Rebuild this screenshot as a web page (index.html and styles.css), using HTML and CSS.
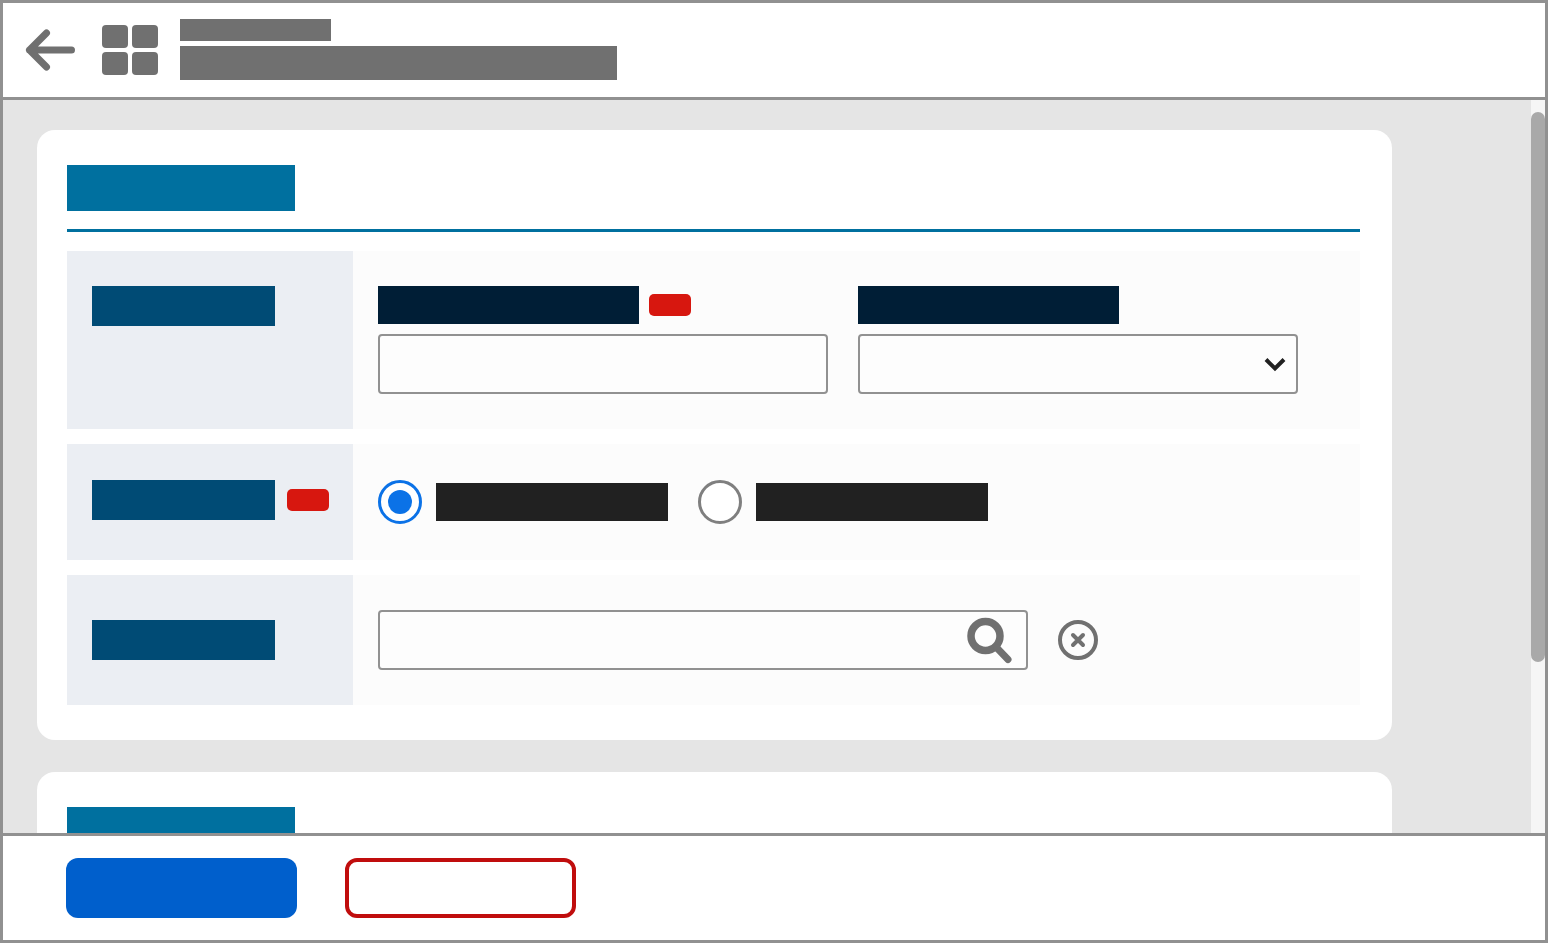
FILE: index.html
```html
<!DOCTYPE html>
<html>

<head>
    <meta charset="utf-8">
    <title>Form</title>
    <link rel="stylesheet" href="styles.css">
</head>

<body>
    <div class="frame">
        <header class="topBar">
            <svg class="backIcon" viewBox="0 0 52 44" width="52" height="44">
                <path d="M47.5 22H5.5M22.5 5L5.5 22L22.5 39" fill="none" stroke="#707070" stroke-width="7" stroke-linecap="round" stroke-linejoin="round"/>
            </svg>
            <div class="gridIcon">
                <span></span><span></span><span></span><span></span>
            </div>
            <div class="titles">
                <div class="titleSmall"></div>
                <div class="titleLarge"></div>
            </div>
        </header>

        <div class="middle">
            <main class="content">
                <section class="card">
                    <div class="cardHeading"></div>
                    <div class="cardRule"></div>

                    <div class="row rowName">
                        <div class="rowLabel">
                            <div class="labelBar"></div>
                        </div>
                        <div class="rowValue">
                            <div class="field fieldLeft">
                                <div class="fieldLabel">
                                    <div class="fieldBar"></div>
                                    <div class="badge"></div>
                                </div>
                                <div class="inputBox"></div>
                            </div>
                            <div class="field fieldRight">
                                <div class="fieldLabel">
                                    <div class="fieldBar"></div>
                                </div>
                                <div class="inputBox selectBox">
                                    <svg viewBox="0 0 24 24" width="24" height="24">
                                        <path d="M3 7.500L12 16.500L21 7.500" fill="none" stroke="#212121" stroke-width="4"/>
                                    </svg>
                                </div>
                            </div>
                        </div>
                    </div>

                    <div class="row rowChoice">
                        <div class="rowLabel">
                            <div class="labelBar"></div>
                            <div class="badge"></div>
                        </div>
                        <div class="rowValue">
                            <div class="radioOption">
                                <span class="radio checked"></span>
                                <div class="radioBar"></div>
                            </div>
                            <div class="radioOption">
                                <span class="radio"></span>
                                <div class="radioBar"></div>
                            </div>
                        </div>
                    </div>

                    <div class="row rowSearch">
                        <div class="rowLabel">
                            <div class="labelBar"></div>
                        </div>
                        <div class="rowValue">
                            <div class="inputBox searchBox">
                                <svg viewBox="0 0 48 48" width="48" height="48">
                                    <circle cx="19.500" cy="20" r="14.500" fill="none" stroke="#707070" stroke-width="7.500"/>
                                    <path d="M31 32L42 43.500" fill="none" stroke="#707070" stroke-width="7" stroke-linecap="round"/>
                                </svg>
                            </div>
                            <svg class="clearIcon" viewBox="0 0 40 40" width="40" height="40">
                                <circle cx="20" cy="20" r="18" fill="none" stroke="#707070" stroke-width="4"/>
                                <path d="M15 15L25 25M25 15L15 25" fill="none" stroke="#707070" stroke-width="4" stroke-linecap="round"/>
                            </svg>
                        </div>
                    </div>
                </section>

                <section class="card">
                    <div class="cardHeading"></div>
                </section>
            </main>
            <div class="scrollTrack">
                <div class="scrollThumb"></div>
            </div>
        </div>

        <footer class="bottomBar">
            <button class="btn btnPrimary"></button>
            <button class="btn btnDanger"></button>
        </footer>
    </div>
</body>
</html>
```

FILE: styles.css
```css
html, body {
    margin: 0;
    height: 100%;
    overflow: hidden;
    background-color: white;
}

.frame {
    box-sizing: border-box;
    width: 1548px;
    height: 943px;
    border: 3px solid #919191;
    display: flex;
    flex-direction: column;
}

/* top bar */
.topBar {
    flex: none;
    height: 94px;
    border-bottom: 3px solid #919191;
    padding-left: 21px;
    display: flex;
    align-items: center;
    background-color: white;
}
.gridIcon {
    margin-left: 26px;
    display: grid;
    grid-template-columns: 26px 26px;
    grid-template-rows: 23px 23px;
    gap: 4px;
}
.gridIcon span {
    background-color: #707070;
    border-radius: 4px;
}
.titles {
    margin-left: 22px;
    align-self: flex-start;
    padding-top: 16px;
}
.titleSmall {
    width: 151px;
    height: 22px;
    background-color: #707070;
}
.titleLarge {
    width: 437px;
    height: 34px;
    margin-top: 5px;
    background-color: #707070;
}

/* scrolling part */
.middle {
    flex: 1;
    min-height: 0;
    display: flex;
    background-color: #e5e5e5;
}
.content {
    flex: 1;
    overflow: hidden;
    padding: 30px 0 0 34px;
}
.scrollTrack {
    flex: none;
    width: 14px;
    background-color: #f6f6f6;
    padding-top: 12px;
}
.scrollThumb {
    height: 550px;
    background-color: #a9a9a9;
    border-radius: 8px;
}

.card {
    box-sizing: border-box;
    width: 1355px;
    padding: 35px 32px 35px 30px;
    margin-bottom: 32px;
    background-color: white;
    border-radius: 18px;
}
.cardHeading {
    width: 228px;
    height: 46px;
    background-color: #00709f;
}
.cardRule {
    height: 3px;
    margin: 18px 0 19px;
    background-color: #00709f;
}

.row {
    display: flex;
    margin-bottom: 15px;
}
.row:last-child {
    margin-bottom: 0;
}
.rowName { height: 178px; }
.rowChoice { height: 116px; }
.rowSearch { height: 130px; }

.rowLabel {
    box-sizing: border-box;
    flex: none;
    width: 286px;
    padding: 35px 0 0 25px;
    display: flex;
    align-items: flex-start;
    background-color: #ebeef3;
}
.rowChoice .rowLabel { padding-top: 36px; }
.rowSearch .rowLabel { padding-top: 45px; }

.labelBar {
    width: 183px;
    height: 40px;
    background-color: #004b75;
}
.badge {
    width: 42px;
    height: 22px;
    margin: 9px 0 0 12px;
    background-color: #d7170f;
    border-radius: 5px;
}

.rowValue {
    box-sizing: border-box;
    flex: 1;
    padding: 35px 0 0 25px;
    display: flex;
    align-items: flex-start;
    background-color: #fcfcfc;
}
.rowChoice .rowValue { padding-top: 36px; }

/* fields */
.fieldLeft {
    width: 450px;
    margin-right: 30px;
}
.fieldRight {
    width: 440px;
}
.fieldLabel {
    display: flex;
    height: 38px;
    margin-bottom: 10px;
}
.fieldBar {
    width: 261px;
    height: 38px;
    background-color: #001e36;
}
.fieldLabel .badge {
    margin: 8px 0 0 10px;
}
.inputBox {
    box-sizing: border-box;
    height: 60px;
    border: 2px solid #919191;
    border-radius: 4px;
    background-color: #fdfdfd;
    display: flex;
    align-items: center;
    justify-content: flex-end;
}
.selectBox {
    padding-right: 9px;
}
.searchBox {
    width: 650px;
    padding-right: 12px;
}
.clearIcon {
    margin: 10px 0 0 30px;
}

/* radios */
.radioOption {
    display: flex;
    align-items: center;
    gap: 14px;
    margin-right: 30px;
}
.radio {
    box-sizing: border-box;
    width: 44px;
    height: 44px;
    border: 3px solid #7f7f7f;
    border-radius: 50%;
    background-color: white;
    display: flex;
    align-items: center;
    justify-content: center;
}
.radio.checked {
    border-color: #0b72e7;
}
.radio.checked::after {
    content: "";
    width: 24px;
    height: 24px;
    border-radius: 50%;
    background-color: #0b72e7;
}
.radioBar {
    width: 232px;
    height: 38px;
    background-color: #212121;
}

/* bottom bar */
.bottomBar {
    box-sizing: border-box;
    flex: none;
    height: 107px;
    border-top: 3px solid #919191;
    padding: 22px 0 0 63px;
    display: flex;
    align-items: flex-start;
    gap: 48px;
    background-color: white;
}
.btn {
    box-sizing: border-box;
    width: 231px;
    height: 60px;
    padding: 0;
    border-radius: 12px;
}
.btnPrimary {
    border: 0;
    background-color: #005fcc;
}
.btnDanger {
    border: 4px solid #c00d0d;
    background-color: white;
}
```
